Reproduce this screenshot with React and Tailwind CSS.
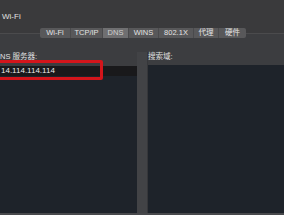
const tabs = [
  { label: 'Wi-Fi', w: 'w-[31px]' },
  { label: 'TCP/IP', w: 'w-[32px]' },
  { label: 'DNS', w: 'w-[26px]', active: true },
  { label: 'WINS', w: 'w-[30px]' },
  { label: '802.1X', w: 'w-[35px]' },
  { label: '代理', w: 'w-[25px]' },
  { label: '硬件', w: 'w-[27px]' },
];

const font = { fontFamily: '"Liberation Sans", "Noto Sans CJK SC", sans-serif' };

export default function App() {
  return (
    <div
      className="w-[284px] h-[215px] bg-[#3a3a3c] overflow-hidden relative flex flex-col text-[#e0e0e0]"
      style={font}
    >
      {/* Title */}
      <div className="pl-[2px] pt-[12px] h-[28px] text-[8px] leading-[10px]">Wi-Fi</div>

      {/* Tabs */}
      <div className="relative z-10 flex justify-start pl-[40px] h-[10px]">
        <div className="flex h-[10px] rounded-[2px] overflow-hidden bg-[#58585a] divide-x divide-[#4a4a4c]">
          {tabs.map((t) => (
            <div
              key={t.label}
              className={`${t.w} flex items-center justify-center text-[7.5px] leading-none ${
                t.active ? 'bg-[#6f6f71] text-[#d0d0d0]' : 'text-[#e4e4e4]'
              }`}
            >
              {t.label}
            </div>
          ))}
        </div>
      </div>

      {/* Box */}
      <div className="-mt-[5px] flex-1 border-t border-[#4b4b4d] bg-[#3c3d40] flex flex-col">
        <div className="flex flex-1 pt-[18px]">
          {/* DNS servers */}
          <div className="w-[137px] flex flex-col">
            <div className="text-[7.5px] leading-[10px] h-[10px]">NS 服务器:</div>
            <div className="mt-[4px] h-[10px] bg-[#19191b] flex items-center text-[8px] leading-none text-[#ebebeb] pl-[1px]">
              14.114.114.114
            </div>
            <div className="flex-1 bg-[#1e232a]"></div>
          </div>

          <div className="w-[11px] bg-[#424346] border-r border-[#36373a]"></div>

          {/* Search domains */}
          <div className="flex-1 flex flex-col">
            <div className="text-[7.5px] leading-[10px] h-[10px]">搜索域:</div>
            <div className="mt-[3px] flex-1 bg-[#1e232a]"></div>
          </div>
        </div>
        <div className="h-[2px] bg-[#48494c]"></div>
      </div>

      {/* Red highlight annotation */}
      <div className="absolute left-[-4px] top-[60px] w-[107px] h-[20px] border-[3px] border-[#d3151b] rounded-[2px]"></div>
    </div>
  );
}
